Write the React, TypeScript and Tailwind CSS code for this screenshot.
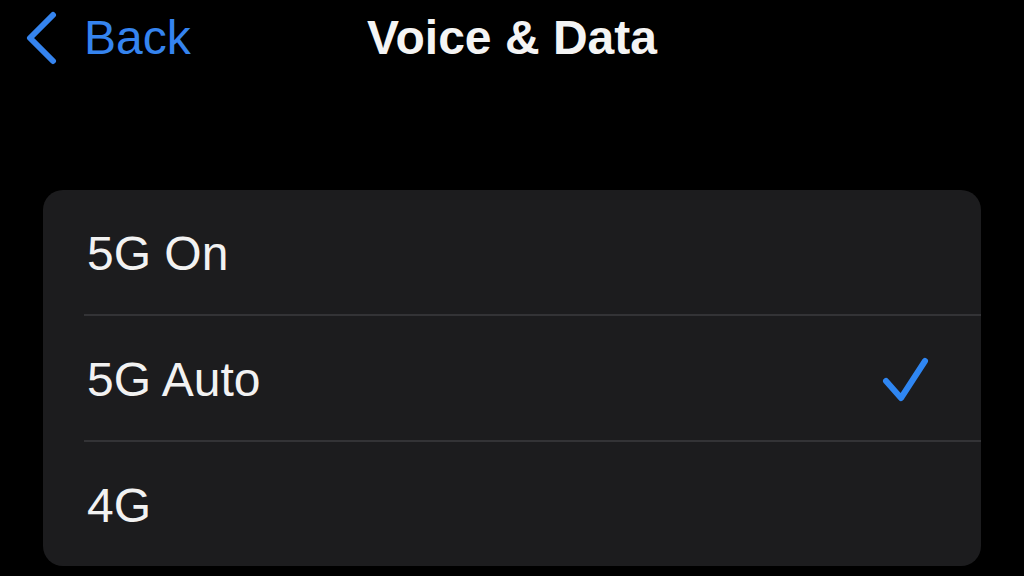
import React from 'react';

const options = [
  { label: '5G On', selected: false },
  { label: '5G Auto', selected: true },
  { label: '4G', selected: false },
];

const App: React.FC = () => {
  return (
    <div
      className="w-full h-[576px] bg-black overflow-hidden text-white"
      style={{ fontFamily: '"Liberation Sans", Arial, sans-serif' }}
    >
      {/* nav bar */}
      <div className="h-[76px] grid grid-cols-[1fr_auto_1fr] items-center">
        <div className="flex items-center pl-[22px] text-[#3584ef]">
          <svg width="40" height="54" viewBox="0 0 40 54" fill="none">
            <polyline
              points="31,4 8,27 31,50"
              stroke="#3584ef"
              strokeWidth="6"
              strokeLinecap="round"
              strokeLinejoin="round"
            />
          </svg>
          <span className="text-[48px] leading-none ml-[22px]">Back</span>
        </div>
        <div className="text-[48px] font-bold leading-none text-[#f4f4f4]">Voice &amp; Data</div>
        <div />
      </div>

      {/* options list */}
      <div className="mt-[114px] mx-[43px] rounded-[20px] bg-[#1c1c1e] overflow-hidden">
        {options.map((opt, i) => (
          <div key={opt.label}>
            {i > 0 && <div className="ml-[41px] h-[2px] bg-[#333336]" />}
            <div className="h-[124px] flex items-center justify-between pl-[44px] pr-[52px]">
              <span className="text-[48px] leading-none text-[#f2f2f2] mt-[3px]">{opt.label}</span>
              {opt.selected && (
                <svg width="48" height="46" viewBox="0 0 48 46" fill="none" className="mt-[2px]">
                  <polyline
                    points="5,25 20,42 44,5"
                    stroke="#2f86f2"
                    strokeWidth="6"
                    strokeLinecap="round"
                    strokeLinejoin="round"
                  />
                </svg>
              )}
            </div>
          </div>
        ))}
      </div>
    </div>
  );
};

export default App;
